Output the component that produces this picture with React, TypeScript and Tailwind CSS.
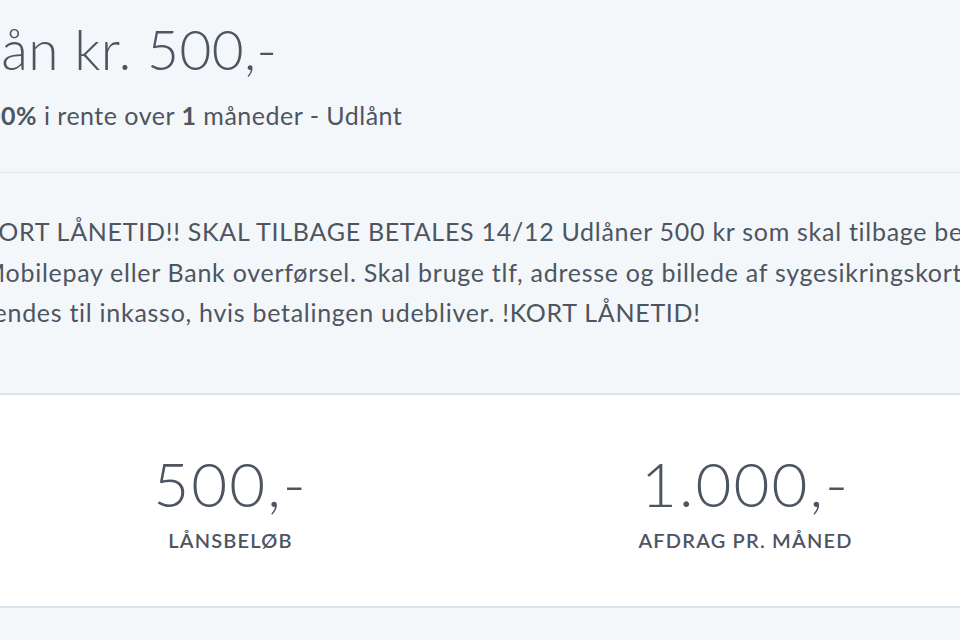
const font = { fontFamily: "Lato, 'Open Sans', sans-serif" };

function Stat({ value, label }: { value: string; label: string }) {
  return (
    <div className="flex flex-col items-center">
      <div className="text-[62px] leading-[62px] font-light tracking-[2px] text-[#4d5561]">{value}</div>
      <div className="mt-[12px] text-[20px] leading-[28px] font-semibold tracking-[1.2px] text-[#4d5561]">
        {label}
      </div>
    </div>
  );
}

export default function App() {
  return (
    <div className="w-[960px] h-[640px] overflow-hidden bg-[#f4f7fa] text-[#4d5561]" style={font}>
      <div className="pt-[17px] pb-[41px] border-b border-[#e3e8ed]">
        <h1 className="-ml-[27px] text-[55px] leading-[64px] font-light tracking-[0.4px] whitespace-nowrap">
          Lån kr. 500,-
        </h1>
        <p className="-ml-[29px] mt-[18px] text-[25px] leading-[32px] tracking-[0.5px] whitespace-nowrap">
          <b className="font-bold">100%</b> i rente over <b className="font-bold">1</b> måneder - Udlånt
        </p>
      </div>

      <div className="pt-[38px] pb-[60px] border-b-2 border-[#d9e3ec]">
        <p className="-ml-[18px] text-[25px] leading-[40.5px] tracking-[0.72px] whitespace-nowrap">
          KORT LÅNETID!! SKAL TILBAGE BETALES 14/12 Udlåner 500 kr som skal tilbage betales via
          <br />
          Mobilepay eller Bank overførsel. Skal bruge tlf, adresse og billede af sygesikringskort. Lånet
          <br />
          sendes til inkasso, hvis betalingen udebliver. !KORT LÅNETID!
        </p>
      </div>

      <div className="bg-white border-b-2 border-[#d9e3ec]">
        <div className="-ml-[27px] w-[1030px] grid grid-cols-2 pt-[57px] pb-[52px]">
          <Stat value="500,-" label="LÅNSBELØB" />
          <Stat value="1.000,-" label="AFDRAG PR. MÅNED" />
        </div>
      </div>
    </div>
  );
}
